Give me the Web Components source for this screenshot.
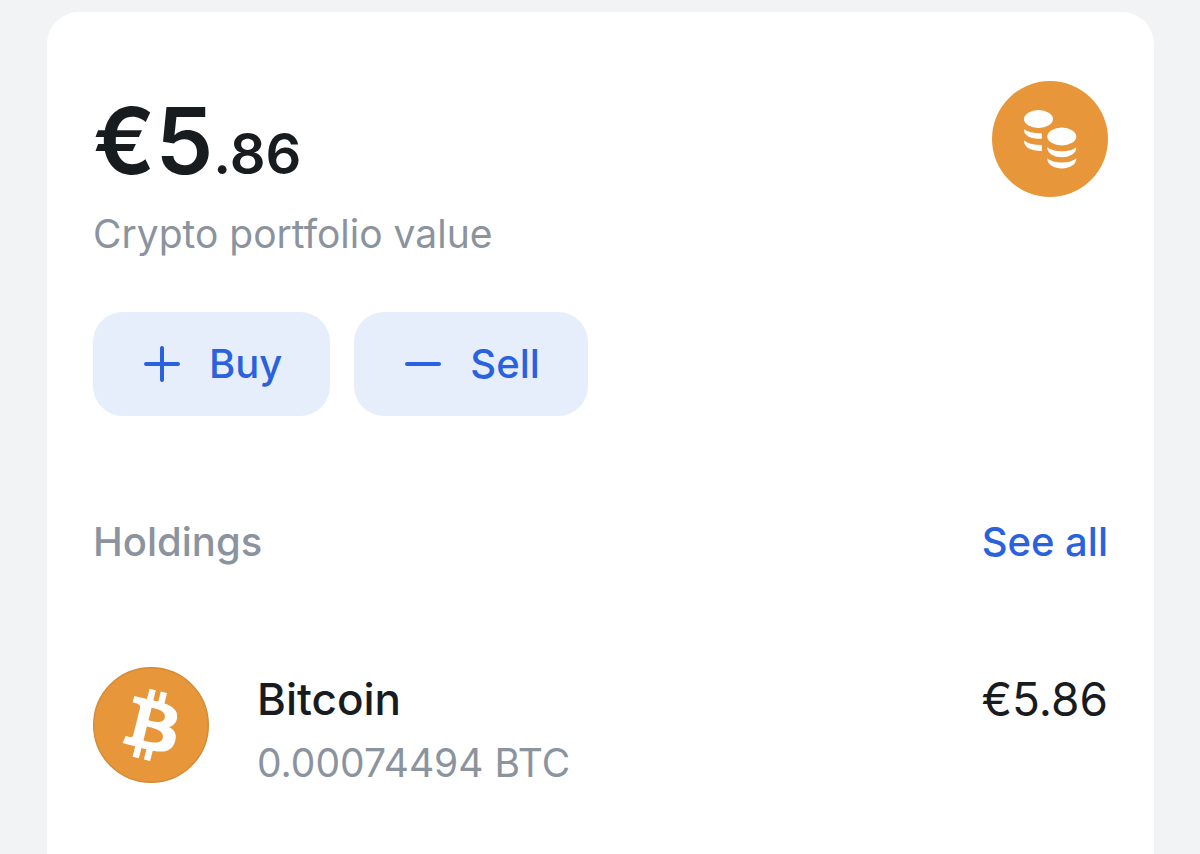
<!DOCTYPE html>
<html lang="en">
<head>
<meta charset="utf-8">
<meta name="viewport" content="width=device-width, initial-scale=1">
<title>Crypto portfolio</title>
<style>
  html { height: 100%; }
  body {
    margin: 0;
    min-height: 100%;
    display: flex;
    background: #f2f3f5;
    color: #191c1f;
    font-family: Inter, "Liberation Sans", sans-serif;
    --muted: #8b939e;
    --accent: #2a62de;
    --accent-soft: #e6eefb;
    --orange: #e8963a;
  }
</style>
</head>
<body>
<portfolio-page>
  <portfolio-summary slot="summary" whole="€5" cents=".86">
    Crypto portfolio value
    <coins-icon slot="icon"></coins-icon>
  </portfolio-summary>
  <action-button slot="actions" icon="plus">Buy</action-button>
  <action-button slot="actions" icon="minus">Sell</action-button>
  <section-header slot="holdings" action="See all">Holdings</section-header>
  <holding-row slot="holdings">
    <bitcoin-icon slot="icon"></bitcoin-icon>
    <span slot="name">Bitcoin</span>
    <span slot="amount">0.00074494 BTC</span>
    <span slot="value">€5.86</span>
  </holding-row>
</portfolio-page>

<script>
  class BaseElement extends HTMLElement {
    connectedCallback() {
      if (this.shadowRoot) return;
      this.attachShadow({ mode: "open" }).innerHTML = this.render();
    }
  }

  customElements.define("portfolio-page", class extends BaseElement {
    render() {
      return `
        <style>
          :host { display: flex; flex: 1; box-sizing: border-box; padding: 12px 46px 0 47px; }
          main { flex: 1; min-width: 0; padding: 69px 46px 40px; background: #fff; border-radius: 32px 32px 0 0; }
          .actions { display: flex; flex-wrap: wrap; gap: 24px; margin: 52px 0 96px; }
        </style>
        <main>
          <slot name="summary"></slot>
          <div class="actions"><slot name="actions"></slot></div>
          <slot name="holdings"></slot>
        </main>`;
    }
  });

  customElements.define("portfolio-summary", class extends BaseElement {
    render() {
      return `
        <style>
          :host { display: flex; justify-content: space-between; align-items: flex-start; gap: 24px; }
          h1 { margin: 0; padding-top: 6px; font-size: 92px; line-height: 108px; font-weight: 600; }
          small { font-size: 56px; }
          p { margin: 12px 0 0; font-size: 39px; line-height: 52px; color: var(--muted); }
          h1 + p { margin-top: 0; }
        </style>
        <div>
          <h1>${this.getAttribute("whole")}<small>${this.getAttribute("cents")}</small></h1>
          <p><slot></slot></p>
        </div>
        <slot name="icon"></slot>`;
    }
  });

  customElements.define("action-button", class extends BaseElement {
    render() {
      const path = this.getAttribute("icon") === "plus" ? "M7 23h32M23 7v32" : "M7 23h32";
      return `
        <style>
          :host { display: block; }
          button {
            display: flex; align-items: center; gap: 24px;
            height: 104px; padding: 0 48px 0 46px;
            border: 0; border-radius: 30px; background: var(--accent-soft);
            color: var(--accent); font: 500 40px/48px Inter, "Liberation Sans", sans-serif; cursor: pointer;
          }
          svg { width: 46px; height: 46px; fill: none; stroke: currentColor; stroke-width: 4; stroke-linecap: round; }
        </style>
        <button type="button"><svg viewBox="0 0 46 46" aria-hidden="true"><path d="${path}"/></svg><span><slot></slot></span></button>`;
    }
  });

  customElements.define("section-header", class extends BaseElement {
    render() {
      return `
        <style>
          :host { display: flex; justify-content: space-between; align-items: center; gap: 24px; margin-bottom: 95px; font-size: 40px; line-height: 60px; font-weight: 500; }
          h2 { margin: 0; font: inherit; color: var(--muted); }
          a { color: var(--accent); text-decoration: none; }
        </style>
        <h2><slot></slot></h2>
        <a href="#">${this.getAttribute("action")}</a>`;
    }
  });

  customElements.define("holding-row", class extends BaseElement {
    render() {
      return `
        <style>
          :host { display: flex; gap: 48px; font-size: 44px; line-height: 64px; }
          .text { flex: 1; min-width: 0; }
          .name { font-weight: 500; }
          .amount { font-size: 39px; color: var(--muted); }
          .value { font-size: 46px; }
        </style>
        <slot name="icon"></slot>
        <div class="text">
          <div class="name"><slot name="name"></slot></div>
          <div class="amount"><slot name="amount"></slot></div>
        </div>
        <div class="value"><slot name="value"></slot></div>`;
    }
  });

  const iconStyle = `<style>
    :host { display: block; flex: none; width: 116px; height: 116px; }
    svg { display: block; width: 100%; height: 100%; }
    .disc { fill: var(--orange); }
  </style>`;

  customElements.define("coins-icon", class extends BaseElement {
    render() {
      return `${iconStyle}
        <svg viewBox="0 0 116 116" aria-hidden="true">
          <circle class="disc" cx="58" cy="58" r="58"/>
          <g fill="#fff">
            <ellipse cx="46.5" cy="38" rx="14.5" ry="9"/>
            <path d="M32 48.200Q38 52.500 49.800 52.200V57.800Q32 58 32 48.200Z"/>
            <path d="M32 59.500Q38 64 49.800 64V70Q32 69.500 32 59.500Z"/>
            <ellipse cx="69.800" cy="55.500" rx="14.500" ry="9"/>
            <path d="M55.200 66.300Q60 70.300 69.800 70.300T84.400 66.300C84.400 73 77 76.300 69.800 76.300S55.200 73 55.200 66.300Z"/>
            <path d="M55.200 77.300Q60 81.500 69.800 81.500T84.400 77.300C84.400 84 77 87.500 69.800 87.500S55.200 84 55.200 77.300Z"/>
          </g>
        </svg>`;
    }
  });

  customElements.define("bitcoin-icon", class extends BaseElement {
    render() {
      return `${iconStyle}
        <svg viewBox="0 0 32 32" aria-hidden="true">
          <circle class="disc" cx="16" cy="16" r="15.8" stroke="#d58a38" stroke-width=".4"/>
          <path fill="#fff" fill-rule="evenodd" d="M23.189 14.02c.314-2.096-1.283-3.223-3.465-3.975l.708-2.84-1.728-.43-.69 2.765c-.454-.114-.92-.22-1.385-.326l.695-2.783L15.596 6l-.708 2.839c-.376-.086-.746-.17-1.104-.26l.002-.009-2.384-.595-.46 1.846s1.283.294 1.256.312c.7.175.826.638.805 1.006l-.806 3.235c.048.012.11.03.18.057l-.183-.045-1.13 4.532c-.086.212-.303.531-.793.41.018.025-1.256-.313-1.256-.313l-.858 1.978 2.25.561c.418.105.828.215 1.231.318l-.715 2.872 1.727.43.708-2.84c.472.127.93.245 1.378.357l-.706 2.828 1.728.43.715-2.866c2.948.558 5.164.333 6.097-2.333.752-2.146-.037-3.385-1.588-4.192 1.13-.26 1.98-1.003 2.207-2.538zm-3.95 5.538c-.533 2.147-4.148.986-5.32.695l.95-3.805c1.172.293 4.929.872 4.37 3.11zm.535-5.569c-.487 1.953-3.495.96-4.47.717l.86-3.45c.975.243 4.118.696 3.61 2.733z"/>
        </svg>`;
    }
  });
</script>
</body>
</html>
